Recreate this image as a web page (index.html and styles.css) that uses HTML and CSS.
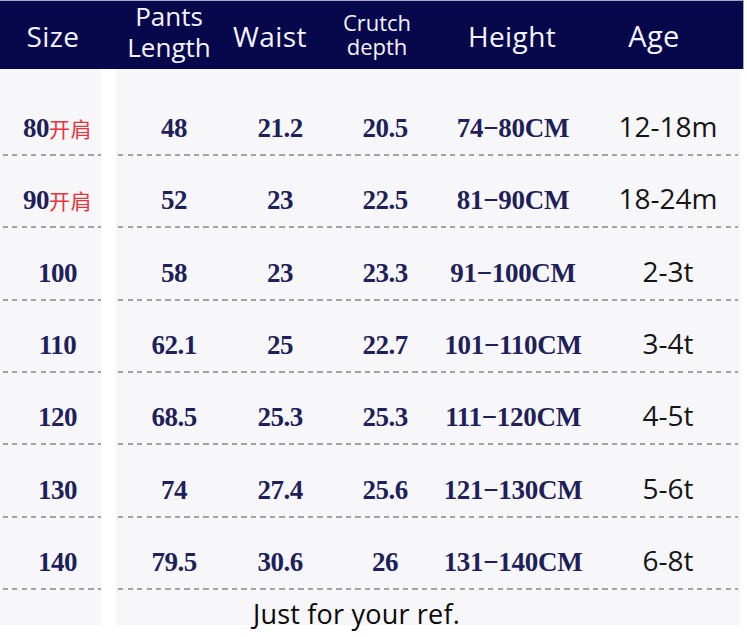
FILE: index.html
```html
<!DOCTYPE html>
<html lang="en">
<head>
<meta charset="utf-8">
<title>Size chart</title>
<link rel="stylesheet" href="styles.css">
</head>
<body>
<div class="sheet">
  <div class="head">
    <div class="hc hc-size">Size</div>
    <div class="hc hc-pants two-big"><span class="ln">Pants</span><span class="ln">Length</span></div>
    <div class="hc hc-waist">Waist</div>
    <div class="hc hc-crutch two-small"><span class="ln">Crutch</span><span class="ln">depth</span></div>
    <div class="hc hc-height">Height</div>
    <div class="hc hc-age">Age</div>
  </div>
  <div class="body">
    <div class="panel panel-left">
      <div class="row"><span class="num">80</span><span class="cn">开肩</span></div>
      <div class="row"><span class="num">90</span><span class="cn">开肩</span></div>
      <div class="row"><span class="num">100</span></div>
      <div class="row"><span class="num">110</span></div>
      <div class="row"><span class="num">120</span></div>
      <div class="row"><span class="num">130</span></div>
      <div class="row"><span class="num">140</span></div>
    </div>
    <div class="panel panel-right">
      <div class="row grid"><span class="num">48</span><span class="num">21.2</span><span class="num">20.5</span><span class="num ht">74−80CM</span><span class="age">12-18m</span></div>
      <div class="row grid"><span class="num">52</span><span class="num">23</span><span class="num">22.5</span><span class="num ht">81−90CM</span><span class="age">18-24m</span></div>
      <div class="row grid"><span class="num">58</span><span class="num">23</span><span class="num">23.3</span><span class="num ht">91−100CM</span><span class="age">2-3t</span></div>
      <div class="row grid"><span class="num">62.1</span><span class="num">25</span><span class="num">22.7</span><span class="num ht">101−110CM</span><span class="age">3-4t</span></div>
      <div class="row grid"><span class="num">68.5</span><span class="num">25.3</span><span class="num">25.3</span><span class="num ht">111−120CM</span><span class="age">4-5t</span></div>
      <div class="row grid"><span class="num">74</span><span class="num">27.4</span><span class="num">25.6</span><span class="num ht">121−130CM</span><span class="age">5-6t</span></div>
      <div class="row grid"><span class="num">79.5</span><span class="num">30.6</span><span class="num">26</span><span class="num ht">131−140CM</span><span class="age">6-8t</span></div>
      <p class="note">Just for your ref.</p>
    </div>
  </div>
</div>
</body>
</html>
```
FILE: styles.css
```css
* { box-sizing: border-box; }
html, body { margin: 0; padding: 0; background: #ffffff; }
body { font-family: "Open Sans", "Noto Sans", sans-serif; }

.sheet { width: 747px; height: 637px; }

.head {
  display: flex;
  width: 744px;
  height: 69px;
  background: #07074c;
  border-top: 1px solid #a4a4cc;
  border-right: 1px solid #a4a4cc;
  color: #f4f4ff;
}
.hc {
  text-align: center;
  font-size: 28px;
  line-height: 66px;
  padding-top: 2px;
  letter-spacing: 0.4px;
}
.hc-size { width: 106px; }
.hc-pants { width: 126px; }
.hc-waist { width: 76px; }
.hc-crutch { width: 138px; }
.hc-height { width: 132px; }
.hc-age { width: 152px; font-size: 29px; }
.two-big, .two-small {
  display: flex;
  flex-direction: column;
  align-items: center;
  letter-spacing: 0;
}
.two-big { font-size: 26px; padding-top: 0; }
.two-big .ln { display: block; height: 31px; line-height: 31px; }
.two-small { font-size: 22px; padding-top: 9px; }
.two-small .ln { display: block; height: 24px; line-height: 24px; }

.body { display: flex; gap: 15px; }
.panel { background: #f7f7f9; }
.panel-left { width: 101px; padding-left: 3px; }
.panel-right { width: 624px; padding: 0 2px; }

.row {
  height: 72.33px;
  display: flex;
  align-items: flex-end;
  justify-content: center;
  padding-bottom: 14px;
  background: repeating-linear-gradient(90deg, #a2a2a6 0 5px, transparent 5px 9.5px) left bottom / 100% 2px no-repeat;
}
.row:first-child { height: 87px; }
.panel-left .row { padding-left: 11px; }

.grid {
  display: grid;
  grid-template-columns: 112px 100px 110px 146px 152px;
  justify-items: center;
  align-items: end;
}

.num {
  font-family: "Liberation Serif", "Times New Roman", serif;
  font-weight: bold;
  font-size: 27px;
  line-height: 27px;
  color: #1f1f5a;
  letter-spacing: -0.5px;
}
.ht { letter-spacing: -0.3px; }
.cn {
  font-family: "Noto Sans CJK SC", sans-serif;
  font-size: 21px;
  line-height: 27px;
  color: #e8343c;
  letter-spacing: 0.5px;
}
.age {
  font-family: "Open Sans", "Noto Sans", sans-serif;
  font-size: 28px;
  line-height: 27px;
  color: #151515;
  padding-left: 12px;
  padding-bottom: 2px;
}

.note {
  margin: 0;
  height: 35px;
  padding: 6px 0 0 135px;
  font-size: 27px;
  line-height: 35px;
  color: #0a0a0a;
  letter-spacing: 0.2px;
}
```
